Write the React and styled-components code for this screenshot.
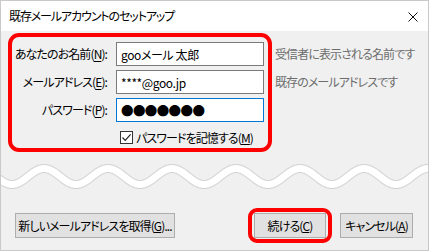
import styled, { createGlobalStyle } from 'styled-components';

const GlobalStyle = createGlobalStyle`
  html, body {
    margin: 0;
    padding: 0;
    background: #ffffff;
  }
  body {
    font-family: "Noto Sans CJK JP", "Noto Sans", sans-serif;
    font-size: 12px;
    font-feature-settings: "palt";
    letter-spacing: -0.9px;
    color: #000000;
  }
`;

const wavePath = () => {
    let d = '';
    for (let x = -4; x <= 432; x += 1) {
        const y = 24.5 - 8 * Math.cos((2 * Math.PI * (x - 43)) / 64);
        d += (x === -4 ? 'M' : 'L') + x + ' ' + y.toFixed(2) + ' ';
    }
    return d;
};

export default function App() {
    const wave = wavePath();
    return (
        <>
            <GlobalStyle />
            <Window>
                <TitleBar>
                    <Title>既存メールアカウントのセットアップ</Title>
                    <Close width="10" height="10" viewBox="0 0 10 10">
                        <path d="M0.5 0.5 L9.5 9.5 M9.5 0.5 L0.5 9.5" stroke="#111" strokeWidth="1" />
                    </Close>
                </TitleBar>
                <Body>
                    <FormRow>
                        <Highlight>
                            <Label>あなたのお名前(<u>N</u>):</Label>
                            <Field readOnly value="gooメール 太郎" />
                            <Label>メールアドレス(<u>E</u>):</Label>
                            <Field readOnly value="****@goo.jp" />
                            <Label>パスワード(<u>P</u>):</Label>
                            <Field readOnly $focused $dots value="●●●●●●●" />
                            <CheckRow>
                                <CheckBox>
                                    <svg width="11" height="11" viewBox="0 0 11 11">
                                        <polyline points="1.5,5.5 4.2,8.3 9.6,2.4" fill="none" stroke="#222" strokeWidth="1.2" />
                                    </svg>
                                </CheckBox>
                                <span>パスワードを記憶する(<u>M</u>)</span>
                            </CheckRow>
                        </Highlight>
                        <Hints>
                            <Hint>受信者に表示される名前です</Hint>
                            <Hint>既存のメールアドレスです</Hint>
                        </Hints>
                    </FormRow>
                    <WaveBox>
                        <svg width="427" height="56" viewBox="0 0 427 56">
                            <path d={wave} fill="none" stroke="#d2d2d2" strokeWidth="9" />
                            <path d={wave} fill="none" stroke="#ffffff" strokeWidth="7" />
                        </svg>
                    </WaveBox>
                    <Footer>
                        <Button $width={160}>新しいメールアドレスを取得(<u>G</u>)...</Button>
                        <Right>
                            <Ring>
                                <Button $width={72}>続ける(<u>C</u>)</Button>
                            </Ring>
                            <Button $width={73}>キャンセル(<u>A</u>)</Button>
                        </Right>
                    </Footer>
                </Body>
            </Window>
        </>
    );
}

const Window = styled.div`
    width: 429px;
    height: 251px;
    box-sizing: border-box;
    border: 1px solid #c9c9c9;
    display: flex;
    flex-direction: column;
    background: #f0f0f0;
`;

const TitleBar = styled.div`
    height: 30px;
    flex: none;
    background: #ffffff;
    display: flex;
    align-items: center;
    justify-content: space-between;
    padding: 0 10px 0 8px;
`;

const Title = styled.div`
    font-size: 12px;
    line-height: 14px;
    letter-spacing: -1.1px;
`;

const Close = styled.svg`
    display: block;
    margin-top: 1px;
`;

const Body = styled.div`
    flex: 1;
    display: flex;
    flex-direction: column;
    padding: 2px 0 0 7px;
`;

const FormRow = styled.div`
    display: flex;
    align-items: flex-start;
`;

const Highlight = styled.div`
    width: 264px;
    height: 119px;
    box-sizing: border-box;
    border: 4px solid #ff0000;
    border-radius: 11px;
    padding: 5px 4px 0 0;
    display: grid;
    grid-template-columns: 95px 148px;
    grid-template-rows: 24px 24px 24px 22px;
    column-gap: 9px;
    row-gap: 4px;
`;

const Label = styled.div`
    text-align: right;
    line-height: 24px;
    white-space: nowrap;
    u {
        text-underline-offset: 2px;
    }
`;

const Field = styled.input`
    box-sizing: border-box;
    width: 148px;
    height: 24px;
    margin: 0;
    padding: 0 0 0 4px;
    border: 1px solid ${props => (props.$focused ? '#0078d7' : '#7a7a7a')};
    background: #ffffff;
    font-family: "Noto Sans CJK JP", "Noto Sans", sans-serif;
    font-feature-settings: "palt";
    font-size: ${props => (props.$dots ? '12.5px' : '12px')};
    letter-spacing: ${props => (props.$dots ? '-0.6px' : '-0.4px')};
    color: #000000;
    outline: none;
`;

const CheckRow = styled.div`
    grid-column: 2;
    display: flex;
    align-items: center;
    gap: 3px;
    padding-left: 4px;
    white-space: nowrap;
`;

const CheckBox = styled.div`
    width: 13px;
    height: 13px;
    flex: none;
    box-sizing: border-box;
    border: 1px solid #333333;
    background: #ffffff;
    display: flex;
    align-items: center;
    justify-content: center;
    svg {
        display: block;
    }
`;

const Hints = styled.div`
    display: flex;
    flex-direction: column;
    gap: 4px;
    padding: 9px 0 0 3px;
`;

const Hint = styled.div`
    line-height: 24px;
    color: #6d6d6d;
    white-space: nowrap;
`;

const WaveBox = styled.div`
    height: 56px;
    margin-left: -7px;
    flex: none;
    svg {
        display: block;
    }
`;

const Footer = styled.div`
    display: flex;
    align-items: center;
    justify-content: space-between;
    padding: 0 15px 0 7px;
    height: 35px;
`;

const Right = styled.div`
    display: flex;
    align-items: center;
    gap: 8px;
`;

const Ring = styled.div`
    border: 4px solid #ff0000;
    border-radius: 9px;
    padding: 1px 2px;
    display: flex;
`;

const Button = styled.div`
    width: ${props => props.$width}px;
    height: 25px;
    flex: none;
    box-sizing: border-box;
    border: 1px solid #adadad;
    background: #e1e1e1;
    display: flex;
    align-items: center;
    justify-content: center;
    white-space: nowrap;
    overflow: hidden;
    font-size: 12px;
`;
